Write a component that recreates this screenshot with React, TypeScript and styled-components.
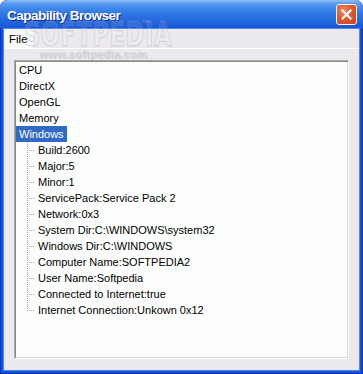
import React from 'react';
import styled, { createGlobalStyle } from 'styled-components';

const Global = createGlobalStyle`
  html, body { margin: 0; padding: 0; background: #ffffff; }
  body { width: 363px; height: 374px; overflow: hidden; }
`;

const Window = styled.div`
  position: relative;
  width: 363px;
  height: 374px;
  box-sizing: border-box;
  display: flex;
  flex-direction: column;
  background: #1450dc;
  border-radius: 8px 8px 0 0;
  overflow: hidden;
  box-shadow: inset 1px 0 0 #0a2fb8, inset -1px 0 0 #0a2fb8, inset 0 -1px 0 #0a2fb8;
`;

const TitleBar = styled.div`
  height: 29px;
  flex: none;
  display: flex;
  align-items: center;
  justify-content: space-between;
  padding: 0 6px 0 7px;
  box-sizing: border-box;
  background: linear-gradient(
    180deg,
    #8fc0fa 0%,
    #5c9df0 12%,
    #3f86ea 30%,
    #2b72e2 55%,
    #1e62dc 80%,
    #1755d2 100%
  );
`;

const Title = styled.span`
  font-family: 'Liberation Sans', Arial, sans-serif;
  font-weight: bold;
  font-size: 13.5px;
  letter-spacing: -0.5px;
  color: #ffffff;
  text-shadow: 1px 1px 0 #0c2a8c;
  padding-top: 1px;
`;

const CloseButton = styled.div`
  width: 21px;
  height: 21px;
  box-sizing: border-box;
  border: 1px solid #f4f4f4;
  border-radius: 3px;
  display: flex;
  align-items: center;
  justify-content: center;
  background: radial-gradient(circle at 35% 30%, #f08a68 0%, #e0582f 45%, #c9421c 100%);
`;

const Body = styled.div`
  flex: 1;
  display: flex;
  flex-direction: column;
  margin: 0 4px 4px 4px;
  background: #ebe9ed;
  box-shadow: 0 0 0 1px #4c88ee;
`;

const MenuBar = styled.div`
  height: 19px;
  flex: none;
  display: flex;
  border-bottom: 1px solid #ffffff;
`;

const MenuItem = styled.div`
  display: flex;
  align-items: center;
  padding: 0 5px;
  background: #f8f8f9;
  font-family: 'Liberation Sans', Arial, sans-serif;
  font-size: 11.5px;
  color: #000;
`;

const Content = styled.div`
  flex: 1;
  display: flex;
  padding: 11px 10px 11px 10px;
`;

const TreeBox = styled.div`
  flex: 1;
  box-sizing: border-box;
  background: #fcfefc;
  border: 1px solid;
  border-color: #a8a8a8 #ffffff #ffffff #a8a8a8;
  box-shadow: inset 1px 1px 0 #8a8a8a, inset -1px -1px 0 #d8d8d8;
  padding: 1px;
  font-family: 'Liberation Sans', Arial, sans-serif;
  font-size: 11px;
  color: #000;
`;

const Row = styled.div`
  height: 16px;
  line-height: 16px;
  display: flex;
  align-items: stretch;
  white-space: nowrap;
`;

const Label = styled.span<{ $selected?: boolean }>`
  padding: 0 3px;
  background: ${(p) => (p.$selected ? '#316ac5' : 'transparent')};
  color: ${(p) => (p.$selected ? '#ffffff' : '#000000')};
`;

const Branch = styled.span<{ $last?: boolean }>`
  flex: none;
  width: 19px;
  height: 16px;
  background:
    repeating-linear-gradient(to bottom, #a0a0a0 0 1px, transparent 1px 2px) 11px 0 /
      1px ${(p) => (p.$last ? '9px' : '16px')} no-repeat,
    repeating-linear-gradient(to right, #a0a0a0 0 1px, transparent 1px 2px) 13px 8px / 6px 1px
      no-repeat;
`;

const Watermark = styled.div`
  position: absolute;
  left: 24px;
  top: 14px;
  font-family: 'DejaVu Sans', sans-serif;
  font-weight: bold;
  font-size: 34px;
  letter-spacing: 1px;
  transform: scaleX(0.66);
  transform-origin: left top;
  color: rgba(255, 255, 255, 0.1);
  -webkit-text-stroke: 1px rgba(150, 150, 165, 0.35);
  pointer-events: none;
`;

const Trademark = styled.div`
  position: absolute;
  left: 141px;
  top: 18px;
  font-family: 'Liberation Sans', Arial, sans-serif;
  font-size: 8px;
  color: rgba(160, 160, 175, 0.6);
  pointer-events: none;
`;

const WatermarkUrl = styled.div`
  position: absolute;
  left: 39px;
  top: 48px;
  font-family: 'Liberation Sans', Arial, sans-serif;
  font-weight: bold;
  font-size: 11px;
  letter-spacing: 0.3px;
  color: rgba(205, 205, 215, 0.55);
  text-shadow: 1px 1px 0 rgba(150, 150, 160, 0.3);
  pointer-events: none;
`;

const roots = ['CPU', 'DirectX', 'OpenGL', 'Memory'];
const children = [
  'Build:2600',
  'Major:5',
  'Minor:1',
  'ServicePack:Service Pack 2',
  'Network:0x3',
  'System Dir:C:\\WINDOWS\\system32',
  'Windows Dir:C:\\WINDOWS',
  'Computer Name:SOFTPEDIA2',
  'User Name:Softpedia',
  'Connected to Internet:true',
  'Internet Connection:Unkown 0x12',
];

export default function App() {
  return (
    <>
      <Global />
      <Window>
        <TitleBar>
          <Title>Capability Browser</Title>
          <CloseButton>
            <svg width="11" height="11" viewBox="0 0 11 11">
              <path d="M1.5 1.5 L9.5 9.5 M9.5 1.5 L1.5 9.5" stroke="#ffffff" strokeWidth="2.2" strokeLinecap="square" />
            </svg>
          </CloseButton>
        </TitleBar>
        <Body>
          <MenuBar>
            <MenuItem>File</MenuItem>
          </MenuBar>
          <Content>
            <TreeBox>
              {roots.map((r) => (
                <Row key={r}>
                  <Label>{r}</Label>
                </Row>
              ))}
              <Row>
                <Label $selected>Windows</Label>
              </Row>
              {children.map((c, i) => (
                <Row key={c}>
                  <Branch $last={i === children.length - 1} />
                  <Label>{c}</Label>
                </Row>
              ))}
            </TreeBox>
          </Content>
        </Body>
        <Watermark>SOFTPEDIA</Watermark>
        <Trademark>™</Trademark>
        <WatermarkUrl>www.softpedia.com</WatermarkUrl>
      </Window>
    </>
  );
}
